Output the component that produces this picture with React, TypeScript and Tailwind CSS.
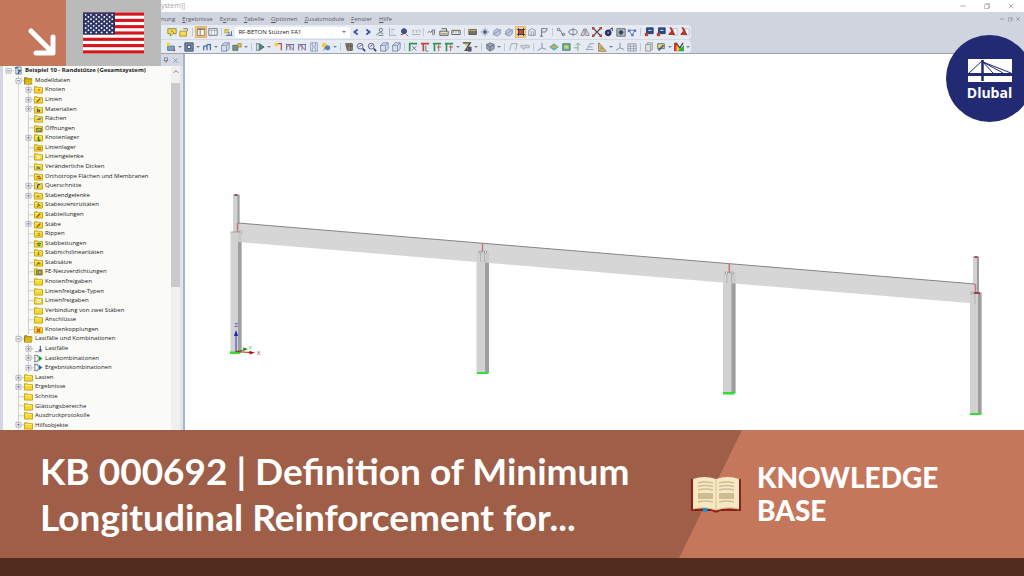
import type { ReactNode } from "react";
import clsx from "clsx";
import { FiMinus, FiX } from "react-icons/fi";
import { VscChromeRestore } from "react-icons/vsc";

type TreeIcon = "root" | "open" | "folder" | "load" | "combo" | "result";

type TreeNode = {
  label: string;
  level: 0 | 1 | 2;
  icon?: TreeIcon;
  toggle?: "plus" | "minus";
  mark?: string;
  markColor?: string;
};

const TREE: TreeNode[] = [
  { label: "Beispiel 10 - Randstütze (Gesamtsystem)", level: 0, icon: "root", toggle: "minus" },
  { label: "Modelldaten", level: 1, icon: "open", toggle: "minus" },
  { label: "Knoten", level: 2, toggle: "plus", mark: "M4.5 5.5h2", markColor: "#e06010" },
  { label: "Linien", level: 2, toggle: "plus", mark: "M3 8l4-4", markColor: "#a05a10" },
  { label: "Materialien", level: 2, toggle: "plus", mark: "M4 4v4M6 5v3", markColor: "#5a5560" },
  { label: "Flächen", level: 2, mark: "M3 6h4M5 5h3", markColor: "#5f8090" },
  { label: "Öffnungen", level: 2, mark: "M3 5h5v3H3z", markColor: "#6f8040" },
  { label: "Knotenlager", level: 2, toggle: "plus", mark: "M5 4v3M4 8h3", markColor: "#12801e" },
  { label: "Linienlager", level: 2, mark: "M3 5h5M3 7h5", markColor: "#b08a10" },
  { label: "Liniengelenke", level: 2, mark: "M4 5h2v2H4z", markColor: "#f8f3c0" },
  { label: "Veränderliche Dicken", level: 2, mark: "M3 5l4 2M3 7h4", markColor: "#5d7890" },
  { label: "Orthotrope Flächen und Membranen", level: 2, mark: "M3 5h4M4 7h4", markColor: "#b06a30" },
  { label: "Querschnitte", level: 2, toggle: "plus", mark: "M4 4h3M4 4v4", markColor: "#4050a0" },
  { label: "Stabendgelenke", level: 2, toggle: "plus", mark: "M3 6h3", markColor: "#a07810" },
  { label: "Stabexzentrizitäten", level: 2, mark: "M4 4l3 3M4 8V6", markColor: "#806a30" },
  { label: "Stabteilungen", level: 2, mark: "M3 8l4-4", markColor: "#a05a10" },
  { label: "Stäbe", level: 2, toggle: "plus", mark: "M3 8l4-4", markColor: "#a05a10" },
  { label: "Rippen", level: 2, mark: "M4 5h3M4 7h3", markColor: "#b89a20" },
  { label: "Stabbettungen", level: 2, mark: "M3 5h5M4 7h3", markColor: "#3f8030" },
  { label: "Stabnichtlinearitäten", level: 2, mark: "M5 4v4", markColor: "#b06a10" },
  { label: "Stabsätze", level: 2, mark: "M3 8l2-3 2 2", markColor: "#a07010" },
  { label: "FE-Netzverdichtungen", level: 2, mark: "M3 4h5v4H3zM5 4v4", markColor: "#707a60" },
  { label: "Knotenfreigaben", level: 2 },
  { label: "Linienfreigabe-Typen", level: 2 },
  { label: "Linienfreigaben", level: 2, mark: "M4 5h3v2H4z", markColor: "#f0ecc8" },
  { label: "Verbindung von zwei Stäben", level: 2 },
  { label: "Anschlüsse", level: 2 },
  { label: "Knotenkopplungen", level: 2, mark: "M3 4l4 4M7 4L3 8", markColor: "#d04a10" },
  { label: "Lastfälle und Kombinationen", level: 1, icon: "open", toggle: "minus" },
  { label: "Lastfälle", level: 2, icon: "load", toggle: "plus" },
  { label: "Lastkombinationen", level: 2, icon: "combo", toggle: "plus" },
  { label: "Ergebniskombinationen", level: 2, icon: "result", toggle: "plus" },
  { label: "Lasten", level: 1, toggle: "plus" },
  { label: "Ergebnisse", level: 1, toggle: "plus" },
  { label: "Schnitte", level: 1 },
  { label: "Glättungsbereiche", level: 1 },
  { label: "Ausdruckprotokolle", level: 1 },
  { label: "Hilfsobjekte", level: 1, toggle: "plus" },
];

const MENU: { before: string; key: string; after: string }[] = [
  { before: "nung", key: "", after: "" },
  { before: "", key: "E", after: "rgebnisse" },
  { before: "E", key: "x", after: "tras" },
  { before: "", key: "T", after: "abelle" },
  { before: "", key: "O", after: "ptionen" },
  { before: "", key: "Z", after: "usatzmodule" },
  { before: "", key: "F", after: "enster" },
  { before: "", key: "H", after: "ilfe" },
];

const INK = "#5b6478";

const GLYPHS: Record<string, ReactNode> = {
  note: <><path d="M1 2h10v6H7l-3 3V8H1z" fill="#f3df4e" stroke="#8a8030" /><path d="M5 4l3 3" stroke="#50503a" /></>,
  folder: <><path d="M1 5h8v6H1z" fill="#f6dd4a" stroke="#a58a20" /><path d="M5 2h5v3" stroke="#786a30" /></>,
  panel: <><path d="M1.500 1.500h9v9h-9z" fill="#f4f0e8" stroke="#7b6650" /><path d="M2 3h8M5 3v7" stroke="#7b6650" /></>,
  table: <><path d="M1 2h10v8H1z" fill="#fafcff" stroke="#5e6470" /><path d="M1 4h10M4 4v6M8 4v6" stroke="#9aa2b0" /></>,
  loadcase: <><path d="M1 3h4v4H1z" fill="#efd940" stroke="#b3a030" /><path d="M2 10h8M6 6v4M9 5v5" stroke="#3d5590" /></>,
  prev: <path d="M8 3L4 6l4 3" stroke="#2d55a8" strokeWidth="2" />,
  next: <path d="M4 3l4 3-4 3" stroke="#2d55a8" strokeWidth="2" />,
  person: <><circle cx="7" cy="3.500" r="2" /><path d="M2 10c2-5 6-3 8-2M4 10h6" /></>,
  axes: <><path d="M3 1v9h8M5 3h4M5 6h2" stroke="#9ba2b0" /></>,
  eye: <><circle cx="6" cy="5" r="3" fill="#3a5790" stroke="#2b3965" /><path d="M8 8l3 3M2 9h3" stroke="#b04038" /></>,
  values: <path d="M1 4h2v3M5 4h2v3M9 4h2v3M1 9h10" stroke="#a4a9b5" />,
  measure: <><path d="M1 7c3-5 3 2 4-1l2-3v7M9 3v6" /></>,
  train: <><path d="M1 5h10v5H1zM3 2h6v3" stroke="#4b4b48" /><path d="M2 8h8" stroke="#b3a568" strokeWidth="2" /></>,
  ruler: <><path d="M1 4h10v5H1z" stroke="#4b4b48" /><path d="M3 4v3M6 4v3M9 4v3" stroke="#9a8a48" /></>,
  render: <><path d="M1 3h9v6H1z" fill="#7a756c" stroke="#4e4b48" /><path d="M1 4h9" stroke="#e2c65c" /></>,
  cross: <><path d="M6 1v10M1 6h10M3 3l6 6M9 3L3 9" stroke="#707cb0" /><circle cx="6" cy="6" r="1.500" fill="#343c78" /></>,
  solid: <><path d="M2 5l4-3 4 2v4l-4 3-4-2z" fill="#bccbe0" stroke="#8191aa" /><path d="M1 9l10-6" stroke="#8191aa" /></>,
  mesh: <><path d="M3 3h6v6H3z" fill="#c84730" stroke="#c84730" /><path d="M3 1v10M9 1v10M1 3h10M1 9h10" stroke="#20306c" /></>,
  building: <path d="M2 10V4l4-2 4 2v6zM5 5v5M8 5v5" stroke="#8c8f98" />,
  flag: <path d="M3 11V2h7L8 6H3M1 11h4" stroke="#5c6474" />,
  chain: <><circle cx="3" cy="3" r="1.500" /><path d="M4 4c4 0 1 5 5 5" /><circle cx="9" cy="9" r="1.500" /></>,
  rotate: <><ellipse cx="6" cy="6" rx="5" ry="3" stroke="#477497" /><path d="M6 1v10" stroke="#b36868" /></>,
  mirror: <path d="M5 2L1 10h4zM7 2l4 8H7z" stroke="#7d6d78" />,
  delete: <><path d="M2 2l8 8M10 2l-8 8" stroke="#3f3f48" strokeWidth="1.500" /><path d="M0 0h3v3H0zM9 0h3v3H9zM0 9h3v3H0zM9 9h3v3H9z" fill="#cc3c38" stroke="none" /></>,
  orbit: <><circle cx="5" cy="7" r="3.500" fill="#26356e" stroke="#1c2450" /><path d="M6 4l4-3v4" stroke="#1c2450" /><circle cx="5" cy="7" r="1" fill="white" /></>,
  camera: <><path d="M1 2h10v9H1z" fill="#b8bec8" stroke="#565a63" /><circle cx="6" cy="6.500" r="2.500" fill="#32405c" /></>,
  nodes: <><path d="M2 4h8L6 10z" stroke="#5d75aa" /><path d="M1 3h3v3H1zM8 3h3v3H8zM5 8h3v3H5z" fill="#6079b5" stroke="none" /></>,
  export: <><path d="M3 1h8v7H3z" fill="#234e86" stroke="#203960" /><path d="M5 4h4" stroke="white" /><path d="M1 7h4v4H1z" fill="#c33f3e" stroke="none" /></>,
  pdf: <><path d="M6 2h5v8H6z" fill="#faf8f8" stroke="#b7b7bc" /><path d="M2 1h2l4 8H1l3-4" fill="#c12f30" stroke="#a32525" /></>,
  newNode: <><path d="M2 5h8v5H2z" fill="#77a5d2" stroke="#46678e" /><path d="M1 1h4v4H1z" fill="#f2cf45" stroke="none" /><path d="M9 9h2v2H9z" fill="#c8403a" stroke="none" /></>,
  surface: <><path d="M1 1h10v10H1z" fill="#7c8aa3" stroke="#374768" /><path d="M4 4h4v4H4z" fill="#eef3fc" stroke="#2c3856" /></>,
  members: <path d="M2 10V5M6 10V3M10 10V2M2 5h4M6 3h4" stroke="#45699c" strokeWidth="1.500" />,
  cube: <path d="M2 4h6v7H2zM2 4l3-3h6L8 4M11 1v7l-3 3" fill="#d7e0ef" stroke="#7181a2" />,
  supports: <><path d="M1 4h6v6H1z" fill="#6f9a7e" stroke="#4d695f" /><path d="M7 2h4v4H7z" fill="#e8c955" stroke="#a07e32" /></>,
  combo: <><path d="M1 2h4M1 10h4M2 2v8" stroke="#6f7990" /><path d="M5 2l6 4-6 4z" fill="#4a8f68" stroke="#38685c" /></>,
  loadRed: <><path d="M4 2h6v8" stroke="#b94f48" strokeWidth="1.500" /><path d="M2 1h4v4H2z" fill="#efd047" stroke="none" /></>,
  loadGrid: <><path d="M1 3h10M2 3v7M6 3v7M10 3v7" stroke="#465fa3" /><path d="M1 7l4-3 5 6" stroke="#ba564f" /></>,
  save: <path d="M2 1h8v10H2zM4 1v4h4V1M4 11V7h4v4" stroke="#8798b8" />,
  colors: <><circle cx="4" cy="4" r="3" fill="#edcb4a" stroke="none" /><circle cx="8" cy="7" r="3" fill="#547fb8" stroke="none" /><path d="M3 10l3-4" stroke="#444e66" /></>,
  hand: <path d="M2 2h8v8H4zM3 5h7M5 2v7M8 2v8" fill="#a6957b" stroke="#524c48" />,
  zoom: <><circle cx="5" cy="5" r="3.500" fill="#dce7f8" stroke="#4b5b92" /><path d="M8 8l3 3" stroke="#32446e" strokeWidth="2" /><path d="M3 6l4-3" stroke="#c23a3d" /></>,
  dimX: <><path d="M2 1v10M2 2h9" stroke="#32945a" strokeWidth="2" /><path d="M5 5l5 5M10 5l-5 5" stroke="#586277" /></>,
  dimY: <><path d="M1 2h10M4 2v9" stroke="#bf4545" strokeWidth="2" /><path d="M7 4v7h3" stroke="#487567" /></>,
  dimXY: <><path d="M1 2h10M3 2v9" stroke="#30925d" strokeWidth="2" /><path d="M8 3v8M6 6h5" stroke="#ba4343" /></>,
  view: <><path d="M1 1h9L4 10h7" fill="#dac77d" stroke="#4d4a3a" strokeWidth="1.500" /><path d="M7 6h4v5H7z" fill="#4d5261" /></>,
  globe: <><path d="M2 3l4-2 5 2v5l-5 3-4-3z" fill="#9ba5b4" stroke="#667184" /><path d="M2 3l4 3 5-3M6 6v5" stroke="#5a6577" /></>,
  frame: <path d="M2 10l2-8h7l-2 8" stroke="#999ea8" />,
  slab: <path d="M1 4h10v3H5v2L1 6z" fill="#d4d6da" stroke="#a4a8b0" />,
  triad: <path d="M6 1v6L1 10M6 7l5 2" stroke="#7182a8" />,
  rainbow: <><path d="M1 6l5-4 5 4-5 4z" fill="#63bd7e" stroke="#57a3c8" /><path d="M3 6h6" stroke="#e8a548" strokeWidth="2" /></>,
  result: <><path d="M2 2h9v8H2z" fill="#60b08c" stroke="#4d7e8a" /><path d="M4 4h5v4H4z" fill="#d5d467" stroke="none" /></>,
  arrowUp: <path d="M6 11V2M3 4l3-3 3 3M1 7h5" stroke="#74a786" />,
  section: <path d="M2 9l4-7h5M1 9h9M4 6h5" stroke="#8b94a8" />,
  diagram: <><path d="M2 1v10h9z" fill="#e7c763" stroke="#9b5b52" /><path d="M4 5v4h4z" fill="#67a871" stroke="none" /></>,
  grid: <path d="M1 2h10v9H1zM1 5h10M1 8h10M4 2v9M8 2v9" stroke="#9299a7" />,
  pages: <path d="M2 3h6v8H2zM4 3V1h6v8H8" fill="#e0e2df" stroke="#8c9291" />,
  notes: <><path d="M2 2h8v6H2z" fill="#e5d478" stroke="#5b6473" /><path d="M3 10l6-6" stroke="#4c5c86" strokeWidth="2" /></>,
  palette: <><path d="M0 1h4v10H0z" fill="#d73533" stroke="none" /><path d="M3 3l5 5-5 3z" fill="#efd535" stroke="none" /><path d="M4 11h8V4z" fill="#36a647" stroke="none" /><path d="M2 1l5 6 4-6" stroke="#454238" strokeWidth="1.500" /></>,
};

// "|" draws a separator and "v" a drop-down arrow, anything else is a glyph
const FILE_TOOLS = ["note", "folder", "|", "panel*", "table", "|", "loadcase"];
const CASE_TOOLS = [
  "prev", "next", "person", "axes", "eye", "values", "|", "measure", "train", "ruler", "|",
  "render", "cross", "solid", "solid", "mesh*", "building", "flag", "|",
  "chain", "rotate", "mirror", "delete", "orbit", "camera", "nodes", "|",
  "export", "export", "pdf", "pdf",
];
const EDIT_TOOLS = [
  "newNode", "v", "surface", "v", "members", "v", "cube", "supports", "v", "|",
  "combo", "v", "loadRed", "loadGrid", "loadGrid", "save", "colors", "v", "|",
  "hand", "zoom", "zoom", "cube", "cube", "|", "dimX", "dimY", "dimXY", "dimXY", "v", "view", "v", "|",
  "globe", "v", "|", "frame", "slab", "|", "triad", "rainbow", "result", "arrowUp", "section", "diagram", "v",
  "triad", "grid", "|", "pages", "notes", "v", "palette", "v",
];

function Tools({ items }: { items: string[] }) {
  return (
    <>
      {items.map((item, i) => {
        if (item === "|") return <span key={i} className="mx-[2px] h-2 border-l border-[#c3c8d3]" />;
        if (item === "v") {
          return (
            <button key={i} type="button" aria-label="Mehr" className="flex w-[6px] justify-center">
              <svg viewBox="0 0 4 4" className="size-[4px]"><path d="M0 1h4L2 3z" fill="#7d8493" /></svg>
            </button>
          );
        }
        const active = item.endsWith("*");
        const name = item.replace("*", "");
        return (
          <button
            key={i}
            type="button"
            aria-label={name}
            className={clsx("flex size-3 items-center justify-center", active && "bg-[#fbd48c] ring-1 ring-[#e6b566] ring-inset")}
          >
            <svg viewBox="0 0 12 12" fill="none" stroke={INK} className="size-[10px]">
              {GLYPHS[name]}
            </svg>
          </button>
        );
      })}
    </>
  );
}

function NodeIcon({ node }: { node: TreeNode }) {
  const common = { viewBox: "0 0 10 10", fill: "none", className: "size-[9px] shrink-0" };
  switch (node.icon) {
    case "root":
      return (
        <svg {...common}>
          <path d="M2 1h6v8H2z" fill="#dce5ef" stroke="#7d8ba0" />
          <path d="M1 2h4M4 5h3L4 9" stroke="#2f5d8c" strokeWidth="1.500" />
        </svg>
      );
    case "open":
      return (
        <svg {...common}>
          <path d="M.5 2h3l1 1h4v6h-8z" fill="#c9a50c" stroke="#8d7610" />
          <path d="M1 9l1-5h7.500L8 9z" fill="#dbba16" />
        </svg>
      );
    case "load":
      return (
        <svg {...common}>
          <path d="M1 8.500h8" stroke="#8d94a4" />
          <path d="M7 2v6M5.500 6L7 8l1.500-2" stroke="#273a88" />
        </svg>
      );
    case "combo":
    case "result":
      return (
        <svg {...common}>
          <path d="M0 1.500h4M0 8.500h4M1 1.500v7M4 1.500v2M4 6.500v2" stroke="#717887" />
          <path d="M5 2l4.500 3L5 8z" fill={node.icon === "combo" ? "#17904a" : "#2a66a8"} />
        </svg>
      );
    default:
      return (
        <svg {...common}>
          <path d="M.5 2h3l1 1h5v6h-9z" fill="#f4d92c" stroke="#c39d12" />
          <path d="M1.500 4h7" stroke="#fbf08c" />
          {node.mark && <path d={node.mark} stroke={node.markColor} strokeWidth="1.500" />}
        </svg>
      );
  }
}

function Guide({ node }: { node: TreeNode }) {
  const box = (
    <svg viewBox="0 0 10 10" preserveAspectRatio="none" fill="none" className="h-0 min-h-full w-[10px]">
      <path d={node.level === 0 ? "M4 5h6" : "M4.500 0v10M4.500 5H10"} stroke="#cdcdca" />
      {node.toggle && (
        <>
          <path d="M2 2.500h5v5H2z" fill="#f7f7fa" stroke="#b3b5bf" />
          <path d={node.toggle === "plus" ? "M3 5h3M4.500 3.500v3" : "M3 5h3"} stroke="#858ca3" />
        </>
      )}
    </svg>
  );
  return node.toggle ? (
    <button type="button" aria-label={`${node.label} umschalten`} className="flex shrink-0 self-stretch">{box}</button>
  ) : (
    <span className="flex shrink-0 self-stretch">{box}</span>
  );
}

function ModelTree() {
  return (
    <ul className="grid min-w-0 flex-1 auto-rows-fr bg-[#fafaf6]">
      {TREE.map((node, i) => (
        <li key={i} className="flex min-h-[9px] items-center overflow-hidden pl-[1px] text-[6px] leading-[9px] whitespace-nowrap text-[#1c1c1c]">
          {node.level > 0 && <span className="w-[10px] shrink-0" />}
          {node.level > 1 && (
            <span className="flex w-[10px] shrink-0 self-stretch">
              <span className="w-[5px] border-r border-[#dadad7]" />
            </span>
          )}
          <Guide node={node} />
          <NodeIcon node={node} />
          <span className={clsx("pl-[2px]", node.level === 0 && "font-bold")}>{node.label}</span>
        </li>
      ))}
    </ul>
  );
}

function Sidebar() {
  return (
    <aside className="flex w-[185px] shrink-0 flex-col border-r-2 border-[#a9b4c8] bg-[#dfe5f0]">
      <div className="flex h-3 items-center justify-end gap-[3px] bg-[#d3d8e2] pr-1 text-[#70788a]">
        <svg viewBox="0 0 8 8" fill="none" stroke="currentColor" className="size-[6px]"><path d="M2 1h4v4H2zM1 5h6M4 5v3" /></svg>
        <button type="button" aria-label="Navigator schließen"><FiX className="size-[7px]" /></button>
      </div>
      <div className="flex flex-1 border-l-[3px] border-[#d3d7e0] pr-[3px]">
        <ModelTree />
        <div className="flex w-[9px] flex-col items-center bg-[#f0f0ee]">
          <svg viewBox="0 0 8 8" fill="none" stroke="#555" className="mt-[1px] h-4 w-[6px] shrink-0 pb-[6px]"><path d="M1 5l3-3 3 3" /></svg>
          <div className="h-[56%] w-full bg-[#cacaca]" />
        </div>
      </div>
    </aside>
  );
}

type ColumnProps = { x: number; top: number; bottom: number; width: number; shade: number };

function Column({ x, top, bottom, width, shade }: ColumnProps) {
  return (
    <g>
      <rect x={x} y={top} width={width} height={bottom - top} fill="#d1d1d1" />
      <rect x={x + width - shade} y={top} width={shade} height={bottom - top} fill="#9e9e9e" />
      <path d={`M${x} ${top}h${width}`} stroke="#8d8d8d" strokeWidth=".7" />
    </g>
  );
}

function ModelView() {
  return (
    <svg viewBox="185 54 839 376" className="block h-auto w-full min-w-0 flex-1 self-start" role="img" aria-label="Modell">
      <Column x={233} top={195} bottom={232} width={6.500} shade={2} />
      <Column x={973} top={257} bottom={293} width={6} shade={2} />
      <Column x={230.500} top={232} bottom={352} width={11} shade={3.500} />
      <Column x={476.500} top={252} bottom={373} width={12.500} shade={4} />
      <Column x={723} top={272.500} bottom={393} width={12.500} shade={4} />
      <Column x={970} top={293} bottom={414} width={11.500} shade={3.500} />
      <path d="M238 223L975 284V303.500L238 242z" fill="#d0d0d0" fillOpacity=".88" />
      <path d="M238 223L975 284" stroke="#858585" />
      <path d="M480.500 252v10M484.500 252v10M727 273v10M731.500 273v10M975 293v11" stroke="#b5b5b5" />
      <path d="M237.500 223v9M482.500 243v9M729.300 264v9M975.500 284v9" stroke="#d07078" strokeWidth="1.500" />
      <path d="M234.500 195h3M974.500 257h3M974 293h6" stroke="#8e2434" strokeWidth="1.500" />
      <g fill="#fff" stroke="#7b8f8b" strokeWidth=".8">
        <circle cx="240.500" cy="232" r="1.200" />
        <circle cx="480" cy="252" r="1.200" />
        <circle cx="485.500" cy="252" r="1.200" />
        <circle cx="726.500" cy="273" r="1.200" />
        <circle cx="732" cy="273" r="1.200" />
        <circle cx="972" cy="293" r="1.200" />
      </g>
      <path d="M230 351.500h9l3 .5-3 2h-9zM477 372h12l-1 2h-11zM723 392h12.500l-1 2.500H723zM970 413h12l-1 2h-11z" fill="#2fe02f" />
      <path d="M236 352v-17" stroke="#3030c8" />
      <path d="M236 330l-2 6h4z" fill="#2020b8" />
      <path d="M236 351.500l8-1.500" stroke="#1e9a28" />
      <path d="M248 349l-5-1.500.5 3.500z" fill="#148a1e" />
      <path d="M236 351.500l14 1" stroke="#d01818" />
      <path d="M255 352.800l-5.500-2v3.800z" fill="#b81010" />
      <g className="font-['Open_Sans',sans-serif] text-[6px]">
        <text x="234.500" y="327" fill="#2020c0">Z</text>
        <text x="248.500" y="350" fill="#2cc03c">Y</text>
        <text x="257" y="355" fill="#c02c3c">X</text>
      </g>
    </svg>
  );
}

function Flag() {
  const rows = Array.from({ length: 9 }, (_, r) => r);
  return (
    <svg viewBox="0 0 61 41" className="h-[42px] w-[61px]" role="img" aria-label="USA">
      <rect width="61" height="41" fill="#fff" />
      {[0, 2, 4, 6, 8, 10, 12].map((n) => (
        <rect key={n} y={(n * 41) / 13} width="61" height={41 / 13} fill="#d5161d" />
      ))}
      <rect width="32" height="22" fill="#2d3566" />
      {rows.flatMap((r) =>
        Array.from({ length: r % 2 ? 5 : 6 }, (_, c) => (
          <circle key={`${r}-${c}`} cx={(r % 2 ? 5.400 : 2.700) + c * 5.300} cy={2.300 + r * 2.200} r=".9" fill="#fff" />
        )),
      )}
    </svg>
  );
}

function Book() {
  return (
    <svg viewBox="0 0 50 37" fill="none" className="h-[37px] w-[50px] shrink-0" aria-hidden>
      <path d="M0 3h50v32H29q-4 3-8 0H0z" fill="#8f1f1a" />
      <path d="M2 3Q13-1 25 3Q37-1 48 3v30Q36 31 25 34Q14 31 2 33z" fill="#f6e8c4" />
      <path d="M2 33Q14 30 25 34Q36 30 48 33" stroke="#d5c190" />
      <path d="M25 3v30" stroke="#e2cf9f" strokeWidth="1.500" />
      <path
        d="M7 7q7-2 15 0M7 10.500q7-2 15 0M7 14q7-2 15 0M7 26q7-2 15 0M28 7q7-2 15 0M28 10.500q7-2 15 0M28 14q7-2 15 0M28 26q7-2 15 0"
        stroke="#cfbd90"
        strokeWidth="1.500"
      />
      <path d="M7 17h15v6H7zM28 17h15v6H28z" fill="#cfbd90" />
      <path d="M12 32h4v4h-4z" fill="#1596dc" />
    </svg>
  );
}

function Logo() {
  return (
    <div className="absolute top-[35px] right-[-9px] flex size-[87px] flex-col items-center rounded-full bg-[#212a73] pt-6 text-white">
      <svg viewBox="0 0 44 23" fill="none" className="h-[23px] w-11" aria-hidden>
        <path d="M0 0h44v14H0zM0 17h44v6H0z" fill="#fff" />
        <path d="M1 14L14 2l11 12M15 3l28 11M15 3l20 11" stroke="#212a73" />
        <path d="M14.500 1v21" stroke="#212a73" strokeWidth="2.500" />
      </svg>
      <span className="mt-[3px] text-[14px] leading-4 font-bold">Dlubal</span>
    </div>
  );
}

export default function App() {
  return (
    <div className="relative flex min-h-screen flex-col overflow-hidden bg-white font-['Open_Sans',sans-serif]">
      <main className="flex flex-1 flex-col">
        <header className="border-b border-[#9fa3ac] bg-[#d0d4de]">
          <div className="flex h-3 items-center justify-between bg-white pr-[9px] pl-[161px]">
            <span className="text-[7px] leading-3 text-[#a5a5a5]">ystem)]</span>
            <div className="flex gap-4 text-[#888]">
              <button type="button" aria-label="Minimieren"><FiMinus className="size-2" /></button>
              <button type="button" aria-label="Wiederherstellen"><VscChromeRestore className="size-2" /></button>
              <button type="button" aria-label="Schließen"><FiX className="size-2" /></button>
            </div>
          </div>
          <div className="flex h-[13px] items-center justify-between pr-[3px] pl-[161px]">
            <nav className="flex gap-[7px] text-[6px] leading-3 text-[#555b68]">
              {MENU.map((item) => (
                <button key={item.before + item.key + item.after} type="button">
                  {item.before}
                  <u>{item.key}</u>
                  {item.after}
                </button>
              ))}
            </nav>
            <div className="flex gap-[2px] text-[#666c78]">
              <button type="button" aria-label="Fenster minimieren"><FiMinus className="size-[6px]" /></button>
              <button type="button" aria-label="Fenster wiederherstellen"><VscChromeRestore className="size-[6px]" /></button>
              <button type="button" aria-label="Fenster schließen"><FiX className="size-[6px]" /></button>
            </div>
          </div>
          <div className="flex h-[14px] w-[691px] items-center rounded-r-sm bg-[#e6eaf2] pl-[166px]">
            <Tools items={FILE_TOOLS} />
            <select
              aria-label="Lastfall"
              className="h-[11px] w-[116px] appearance-none bg-white pl-[3px] text-[6px] leading-[11px] font-medium text-[#222]"
            >
              <option>RF-BETON Stützen FA1</option>
            </select>
            <svg viewBox="0 0 4 4" className="-ml-2 mr-1 size-[4px]"><path d="M0 1h4L2 3z" fill="#6f7480" /></svg>
            <Tools items={CASE_TOOLS} />
          </div>
          <div className="flex h-[14px] w-[691px] items-center rounded-r-sm border-t border-[#d4d8e2] bg-[#e6eaf2] pl-[165px]">
            <Tools items={EDIT_TOOLS} />
          </div>
        </header>
        <div className="flex flex-1">
          <Sidebar />
          <ModelView />
        </div>
      </main>

      <section className="flex min-h-32 items-center bg-[#9e5e48] text-white">
        <h1 className="flex-1 pl-10 font-['Lato',sans-serif] text-[37px] leading-[46px] font-bold">
          KB 000692 | Definition of Minimum Longitudinal Reinforcement for...
        </h1>
        <div className="relative isolate flex w-[345px] shrink-0 items-center gap-4 self-stretch pl-3 before:absolute before:inset-0 before:-z-10 before:bg-[#c5775c] before:[clip-path:polygon(63px_0,100%_0,100%_100%,0_100%)]">
          <Book />
          <p className="w-48 font-['Lato',sans-serif] text-[28px] leading-[33px] font-black">KNOWLEDGE BASE</p>
        </div>
      </section>
      <footer className="h-[18px] bg-[#532c20]" />

      <div className="absolute top-0 left-0 flex h-[66px]">
        <div className="flex w-[66px] items-end justify-end bg-[#c5775c] pr-[10px] pb-[10px]">
          <svg viewBox="0 0 28 28" fill="none" stroke="#fff" strokeWidth="5" strokeLinecap="round" strokeLinejoin="round" className="size-7">
            <path d="M3 3l21 21M25 9v16H8" />
          </svg>
        </div>
        <div className="flex w-[95px] items-center justify-center bg-[#bababa]">
          <Flag />
        </div>
      </div>
      <Logo />
    </div>
  );
}
